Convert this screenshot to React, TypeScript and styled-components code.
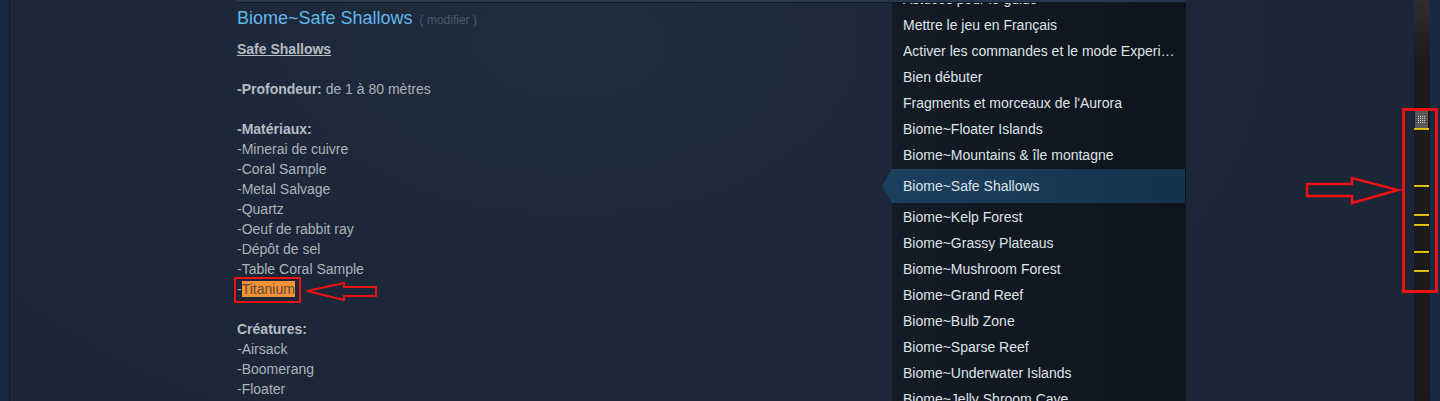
import * as React from 'react'
import styled, { createGlobalStyle } from 'styled-components'

const navItems = [
  'Astuces pour le guide',
  'Mettre le jeu en Français',
  'Activer les commandes et le mode Experimental',
  'Bien débuter',
  "Fragments et morceaux de l'Aurora",
  'Biome~Floater Islands',
  'Biome~Mountains & île montagne',
  'Biome~Safe Shallows',
  'Biome~Kelp Forest',
  'Biome~Grassy Plateaus',
  'Biome~Mushroom Forest',
  'Biome~Grand Reef',
  'Biome~Bulb Zone',
  'Biome~Sparse Reef',
  'Biome~Underwater Islands',
  'Biome~Jelly Shroom Cave',
]

const materials = [
  'Minerai de cuivre',
  'Coral Sample',
  'Metal Salvage',
  'Quartz',
  'Oeuf de rabbit ray',
  'Dépôt de sel',
  'Table Coral Sample',
]

const creatures = ['Airsack', 'Boomerang', 'Floater']

// find-in-page hits drawn on the scrollbar track
const matchTicks = [185, 214, 224, 251, 270]

const App = () => {
  return (
    <Page>
      <GlobalStyle />
      <EdgeStrip $side="left" />
      <Main>
        <Wrap>
          <TopBar />
          <Columns>
            <Article>
              <Title>
                Biome~Safe Shallows <Modifier>( modifier )</Modifier>
              </Title>
              <Body>
                <Heading>Safe Shallows </Heading>
                <br />
                <br />
                <Label>-Profondeur:</Label> de 1 à 80 mètres
                <br />
                <br />
                <Label>-Matériaux:</Label>
                <br />
                {materials.map((m) => (
                  <React.Fragment key={m}>
                    -{m}
                    <br />
                  </React.Fragment>
                ))}
                <Marked>
                  -<Hit>Titanium</Hit>
                  <PointerArrow width="72" height="22" viewBox="0 0 72 22">
                    <polygon
                      points="2,10 39,2 39,6 71,6 71,15 39,15 39,19"
                      fill="none"
                      stroke="#ee1111"
                      strokeWidth="2"
                    />
                  </PointerArrow>
                </Marked>
                <br />
                <br />
                <Label>Créatures:</Label>
                <br />
                {creatures.map((c) => (
                  <React.Fragment key={c}>
                    -{c}
                    <br />
                  </React.Fragment>
                ))}
              </Body>
            </Article>
            <Sidebar>
              <NavList>
                {navItems.map((item) => (
                  <NavItem key={item} $active={item === 'Biome~Safe Shallows'}>
                    <NavText>{item}</NavText>
                  </NavItem>
                ))}
              </NavList>
            </Sidebar>
          </Columns>
        </Wrap>
      </Main>
      <Track>
        <Thumb>
          <svg width="13" height="17" viewBox="0 0 13 17">
            {[0, 1, 2, 3].map((r) =>
              [0, 1, 2, 3].map((c) => (
                <rect key={`${r}-${c}`} x={3 + c * 2} y={5 + r * 2} width="1" height="1" fill="#c8c8c8" />
              ))
            )}
          </svg>
        </Thumb>
        <Tick style={{ top: 128 }} />
        {matchTicks.map((t) => (
          <Tick key={t} style={{ top: t }} />
        ))}
      </Track>
      <EdgeStrip $side="right" />
      <ScrollNote width="140" height="200" viewBox="0 0 140 200">
        <rect x="103.5" y="9.5" width="33" height="182" fill="none" stroke="#ee1111" strokeWidth="3" />
        <polygon
          points="7,84 52,84 52,78 98,90 52,103 52,96 7,96"
          fill="none"
          stroke="#ee1111"
          strokeWidth="2.5"
        />
      </ScrollNote>
    </Page>
  )
}

export default App

// Styles
const GlobalStyle = createGlobalStyle`
  html, body {
    margin: 0;
    padding: 0;
    height: 401px;
    overflow: hidden;
    background: #1b2637;
  }
  #root {
    height: 401px;
  }
`

const Page = styled.div`
  position: relative;
  display: flex;
  height: 401px;
  overflow: hidden;
  font-family: 'Liberation Sans', Arial, sans-serif;
`

const EdgeStrip = styled.div<{ $side: 'left' | 'right' }>`
  width: ${(p) => (p.$side === 'left' ? '9px' : '10px')};
  flex-shrink: 0;
  background: #16293f;
  border-right: ${(p) => (p.$side === 'left' ? '1px solid #111a27' : 'none')};
`

const Main = styled.div`
  flex: 1;
  background: radial-gradient(ellipse 700px 420px at 560px 40px, #1f2c3e 0%, #1c2839 55%, #1b2637 100%);
`

const Wrap = styled.div`
  width: 949px;
  margin-left: 227px;
  display: flex;
  flex-direction: column;
  height: 100%;
`

const TopBar = styled.div`
  height: 2px;
  background: #26364c;
  border-bottom: 1px solid #131b27;
  flex-shrink: 0;
`

const Columns = styled.div`
  display: flex;
  flex: 1;
`

const Article = styled.div`
  flex: 1;
  padding-top: 4px;
`

const Title = styled.div`
  font-size: 18px;
  line-height: 22px;
  height: 22px;
  color: #62b6ea;
  margin-bottom: 10px;
`

const Modifier = styled.span`
  font-size: 12px;
  color: #4c5a6a;
  margin-left: 2px;
`

const Body = styled.div`
  font-size: 14px;
  line-height: 20px;
  color: #acb2b8;
`

const Heading = styled.span`
  font-weight: bold;
  text-decoration: underline;
  color: #b6bcc2;
`

const Label = styled.span`
  font-weight: bold;
  color: #b6bcc2;
`

const Marked = styled.span`
  position: relative;
  display: inline-block;
  line-height: 20px;
  vertical-align: top;

  &::after {
    content: '';
    position: absolute;
    left: -3px;
    right: -6px;
    top: -2px;
    bottom: -4px;
    border: 2px solid #ee1111;
  }
`

const Hit = styled.span`
  background: #f59235;
  color: #5a4b3d;
`

const PointerArrow = styled.svg`
  position: absolute;
  left: 68px;
  top: 2px;
`

const Sidebar = styled.div`
  width: 294px;
  flex-shrink: 0;
  background: linear-gradient(to right, #141b26, #0e141c);
  overflow-x: visible;
  overflow-y: clip;
`

const NavList = styled.div`
  margin-top: -17px;
  display: flex;
  flex-direction: column;
`

const NavItem = styled.div<{ $active?: boolean }>`
  position: relative;
  height: ${(p) => (p.$active ? '34px' : '26px')};
  line-height: ${(p) => (p.$active ? '34px' : '26px')};
  margin: ${(p) => (p.$active ? '1px 1px 1px 0' : '0')};
  padding: 0 11px 0 11px;
  font-size: 14px;
  color: #dfe3e6;
  background: ${(p) => (p.$active ? 'linear-gradient(to right, #1b405f, #12324d)' : 'transparent')};

  &::before {
    content: '';
    display: ${(p) => (p.$active ? 'block' : 'none')};
    position: absolute;
    left: -10px;
    top: 0;
    border-top: 17px solid transparent;
    border-bottom: 17px solid transparent;
    border-right: 10px solid #1b405f;
  }
`

const NavText = styled.div`
  white-space: nowrap;
  overflow: hidden;
  text-overflow: ellipsis;
`

const Track = styled.div`
  position: relative;
  width: 16px;
  flex-shrink: 0;
  background: linear-gradient(#2e2e2e 0, #1b1b1b 60px, #1a1a1a 100%);
`

const Thumb = styled.div`
  position: absolute;
  top: 111px;
  left: 1px;
  width: 13px;
  height: 17px;
  background: #595959;

  svg {
    display: block;
  }
`

const Tick = styled.div`
  position: absolute;
  left: 0;
  width: 15px;
  height: 2px;
  background: linear-gradient(#f4d400, #c9a800);
`

const ScrollNote = styled.svg`
  position: absolute;
  left: 1300px;
  top: 100px;
  pointer-events: none;
`
